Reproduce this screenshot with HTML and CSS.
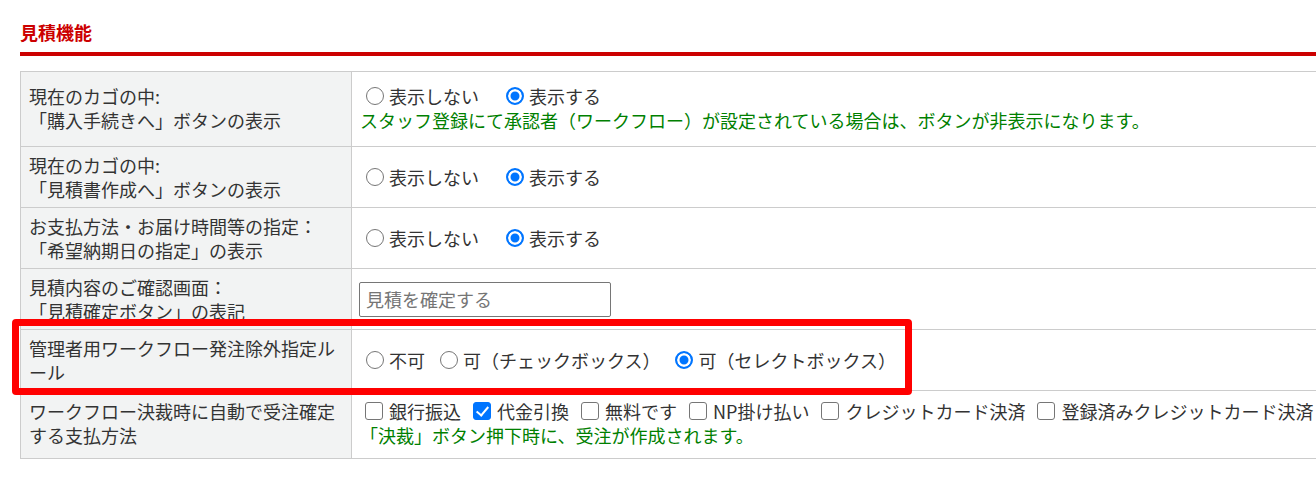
FILE: index.html
```html
<!DOCTYPE html>
<html lang="ja">
<head>
<meta charset="utf-8">
<title>見積機能</title>
<link rel="stylesheet" href="styles.css">
</head>
<body>
<section class="section">
  <h2 class="section-title">見積機能</h2>
  <div class="table-wrap">
    <table class="settings">
      <tr class="row-notice">
        <th class="label" scope="row">現在のカゴの中:<br>「購入手続きへ」ボタンの表示</th>
        <td class="value">
          <div class="options options-wide">
            <label class="opt"><input type="radio" name="cart_order">表示しない</label>
            <label class="opt"><input type="radio" name="cart_order" checked>表示する</label>
          </div>
          <div class="note">スタッフ登録にて承認者（ワークフロー）が設定されている場合は、ボタンが非表示になります。</div>
        </td>
      </tr>
      <tr>
        <th class="label" scope="row">現在のカゴの中:<br>「見積書作成へ」ボタンの表示</th>
        <td class="value">
          <div class="options options-wide">
            <label class="opt"><input type="radio" name="cart_quote">表示しない</label>
            <label class="opt"><input type="radio" name="cart_quote" checked>表示する</label>
          </div>
        </td>
      </tr>
      <tr>
        <th class="label" scope="row">お支払方法・お届け時間等の指定：<br>「希望納期日の指定」の表示</th>
        <td class="value">
          <div class="options options-wide">
            <label class="opt"><input type="radio" name="due_date">表示しない</label>
            <label class="opt"><input type="radio" name="due_date" checked>表示する</label>
          </div>
        </td>
      </tr>
      <tr>
        <th class="label" scope="row">見積内容のご確認画面：<br>「見積確定ボタン」の表記</th>
        <td class="value">
          <input class="text-input" type="text" placeholder="見積を確定する">
        </td>
      </tr>
      <tr>
        <th class="label" scope="row">管理者用ワークフロー発注除外指定ルール</th>
        <td class="value">
          <div class="options options-mid">
            <label class="opt"><input type="radio" name="exclude_rule">不可</label>
            <label class="opt"><input type="radio" name="exclude_rule">可（チェックボックス）</label>
            <label class="opt"><input type="radio" name="exclude_rule" checked>可（セレクトボックス）</label>
          </div>
        </td>
      </tr>
      <tr class="row-payment">
        <th class="label" scope="row">ワークフロー決裁時に自動で受注確定する支払方法</th>
        <td class="value">
          <div class="options options-tight">
            <label class="opt"><input type="checkbox">銀行振込</label>
            <label class="opt"><input type="checkbox" checked>代金引換</label>
            <label class="opt"><input type="checkbox">無料です</label>
            <label class="opt"><input type="checkbox">NP掛け払い</label>
            <label class="opt"><input type="checkbox">クレジットカード決済</label>
            <label class="opt"><input type="checkbox">登録済みクレジットカード決済</label>
          </div>
          <div class="note">「決裁」ボタン押下時に、受注が作成されます。</div>
        </td>
      </tr>
    </table>
    <div class="highlight" aria-hidden="true"></div>
  </div>
</section>
</body>
</html>
```
FILE: styles.css
```css
html, body {
  overflow: hidden;
}

body {
  margin: 0;
  padding: 20px 0 0 20px;
  font-family: "Noto Sans CJK JP", "Noto Sans", sans-serif;
  font-size: 18px;
  line-height: 24px;
  color: #333;
  background: #fff;
}

.section {
  width: max-content;
}

.section-title {
  margin: 0 0 15px;
  padding-bottom: 8px;
  border-bottom: 4px solid #cc0000;
  font-size: 18px;
  line-height: 24px;
  font-weight: bold;
  color: #cc0000;
}

.table-wrap {
  position: relative;
}

.settings {
  border-collapse: collapse;
}

.settings th,
.settings td {
  border: 1px solid #cccccc;
  padding: 6px 8px;
  vertical-align: middle;
  text-align: left;
  font-weight: normal;
}

.label {
  width: 314px;
  background: #f2f3f3;
  line-break: loose;
}

.value {
  white-space: nowrap;
  padding-right: 24px;
}

.row-notice th,
.row-notice td {
  padding-top: 12px;
  padding-bottom: 14px;
}

.row-payment th,
.row-payment td {
  padding-top: 8px;
  padding-bottom: 11px;
}

.options {
  display: flex;
  align-items: center;
  height: 24px;
}

.options-wide {
  gap: 21px;
}

.options-mid {
  gap: 9px;
}

.options-tight {
  gap: 7px;
}

.opt {
  display: inline-flex;
  align-items: center;
  color: #333;
}

.opt input {
  -webkit-appearance: none;
  appearance: none;
  position: relative;
  box-sizing: border-box;
  width: 18px;
  height: 18px;
  margin: 0 5px 0 6px;
  flex: none;
  background: #fff;
  border: 1px solid #767676;
}

.opt input[type="radio"] {
  border-radius: 50%;
}

.opt input[type="radio"]:checked {
  border: 2px solid #0075ff;
  background: #0075ff;
  box-shadow: inset 0 0 0 2.5px #fff;
}

.opt input[type="checkbox"] {
  margin: 0 6px 0 5px;
  border-radius: 3px;
}

.opt input[type="checkbox"]:checked {
  background: #0075ff;
  border-color: #0075ff;
}

.opt input[type="checkbox"]:checked::after {
  content: "";
  position: absolute;
  left: 5px;
  top: 1px;
  width: 5px;
  height: 10px;
  border: solid #fff;
  border-width: 0 2.5px 2.5px 0;
  transform: rotate(40deg);
}

.note {
  color: #008000;
}

.text-input {
  box-sizing: border-box;
  width: 252px;
  height: 35px;
  margin: 0 0 0 -1px;
  padding: 0 6px;
  border: 1px solid #767676;
  border-radius: 2px;
  font-family: inherit;
  font-size: 18px;
  color: #333;
  vertical-align: middle;
}

.text-input::placeholder {
  color: #757575;
}

.highlight {
  position: absolute;
  left: -8px;
  top: 248px;
  width: 900px;
  height: 76px;
  box-sizing: border-box;
  border: 7px solid #ff0000;
  border-radius: 4px;
  pointer-events: none;
}
```
